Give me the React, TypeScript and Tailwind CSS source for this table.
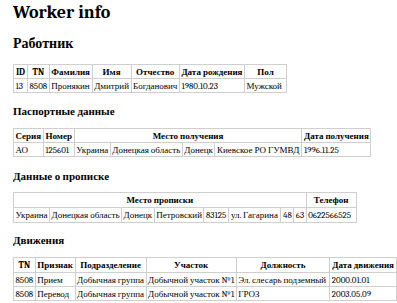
import React from 'react';

/**
 * Worker info page
 *
 * Plain HTML-report look: serif text, thin grey table grid
 */

const cellBase = 'border border-[#cfcfcf] h-[14px] px-[1.5px] py-0 whitespace-nowrap overflow-hidden';
const thClass = `${cellBase} font-bold text-center`;
const tdClass = `${cellBase} text-left`;

function Grid({ cols, children }: { cols: string[]; children: React.ReactNode }) {
  return (
    <table className="table-fixed border-collapse text-[9px] leading-[10px]">
      <colgroup>
        {cols.map((w, i) => (
          <col key={i} className={w} />
        ))}
      </colgroup>
      <tbody>{children}</tbody>
    </table>
  );
}

function Row({ cells }: { cells: string[] }) {
  return (
    <tr>
      {cells.map((c, i) => (
        <td key={i} className={tdClass}>{c}</td>
      ))}
    </tr>
  );
}

export default function App() {
  // Column widths measured off the reference
  const workerCols = ['w-[14px]', 'w-[21px]', 'w-[43px]', 'w-[37px]', 'w-[48px]', 'w-[65px]', 'w-[42px]'];
  const passportCols = ['w-[29px]', 'w-[31px]', 'w-[35px]', 'w-[72px]', 'w-[32px]', 'w-[87px]', 'w-[69px]'];
  const addressCols = ['w-[36px]', 'w-[72px]', 'w-[32px]', 'w-[49px]', 'w-[25px]', 'w-[52px]', 'w-[12px]', 'w-[11px]', 'w-[50px]'];
  const moveCols = ['w-[20px]', 'w-[40px]', 'w-[70px]', 'w-[90px]', 'w-[94px]', 'w-[67px]'];

  return (
    <div className="min-h-[303px] bg-white pl-[13px] pt-[2px] font-serif text-black">
      <h1 className="text-[18px] leading-[21px] font-bold">Worker info</h1>

      <h2 className="mt-[13px] text-[14px] leading-[16px] font-bold">Работник</h2>
      <div className="mt-[12px]">
        <Grid cols={workerCols}>
          <tr>
            {['ID', 'TN', 'Фамилия', 'Имя', 'Отчество', 'Дата рождения', 'Пол'].map((h) => (
              <th key={h} className={thClass}>{h}</th>
            ))}
          </tr>
          <Row cells={['13', '8508', 'Пронякин', 'Дмитрий', 'Богданович', '1980.10.23', 'Мужской']} />
        </Grid>
      </div>

      <h3 className="mt-[12px] text-[11px] leading-[13px] font-bold">Паспортные данные</h3>
      <div className="mt-[10px]">
        <Grid cols={passportCols}>
          <tr>
            <th className={thClass}>Серия</th>
            <th className={thClass}>Номер</th>
            <th className={thClass} colSpan={4}>Место получения</th>
            <th className={thClass}>Дата получения</th>
          </tr>
          <Row cells={['АО', '125601', 'Украина', 'Донецкая область', 'Донецк', 'Киевское РО ГУМВД', '1996.11.25']} />
        </Grid>
      </div>

      <h3 className="mt-[13px] text-[11px] leading-[13px] font-bold">Данные о прописке</h3>
      <div className="mt-[9px]">
        <Grid cols={addressCols}>
          <tr>
            <th className={`${thClass} h-[15px]`} colSpan={8}>Место прописки</th>
            <th className={`${thClass} h-[15px]`}>Телефон</th>
          </tr>
          <tr>
            {['Украина', 'Донецкая область', 'Донецк', 'Петровский', '83125', 'ул. Гагарина', '48', '63', '0622566525'].map(
              (c, i) => (
                <td key={i} className={`${tdClass} h-[15px]`}>{c}</td>
              )
            )}
          </tr>
        </Grid>
      </div>

      <h3 className="mt-[11px] text-[11px] leading-[13px] font-bold">Движения</h3>
      <div className="mt-[10px]">
        <Grid cols={moveCols}>
          <tr>
            {['TN', 'Признак', 'Подразделение', 'Участок', 'Должность', 'Дата движения'].map((h) => (
              <th key={h} className={`${thClass} h-[15px]`}>{h}</th>
            ))}
          </tr>
          <Row cells={['8508', 'Прием', 'Добычная группа', 'Добычной участок №1', 'Эл. слесарь подземный', '2000.01.01']} />
          <Row cells={['8508', 'Перевод', 'Добычная группа', 'Добычной участок №1', 'ГРОЗ', '2003.05.09']} />
        </Grid>
      </div>
    </div>
  );
}
